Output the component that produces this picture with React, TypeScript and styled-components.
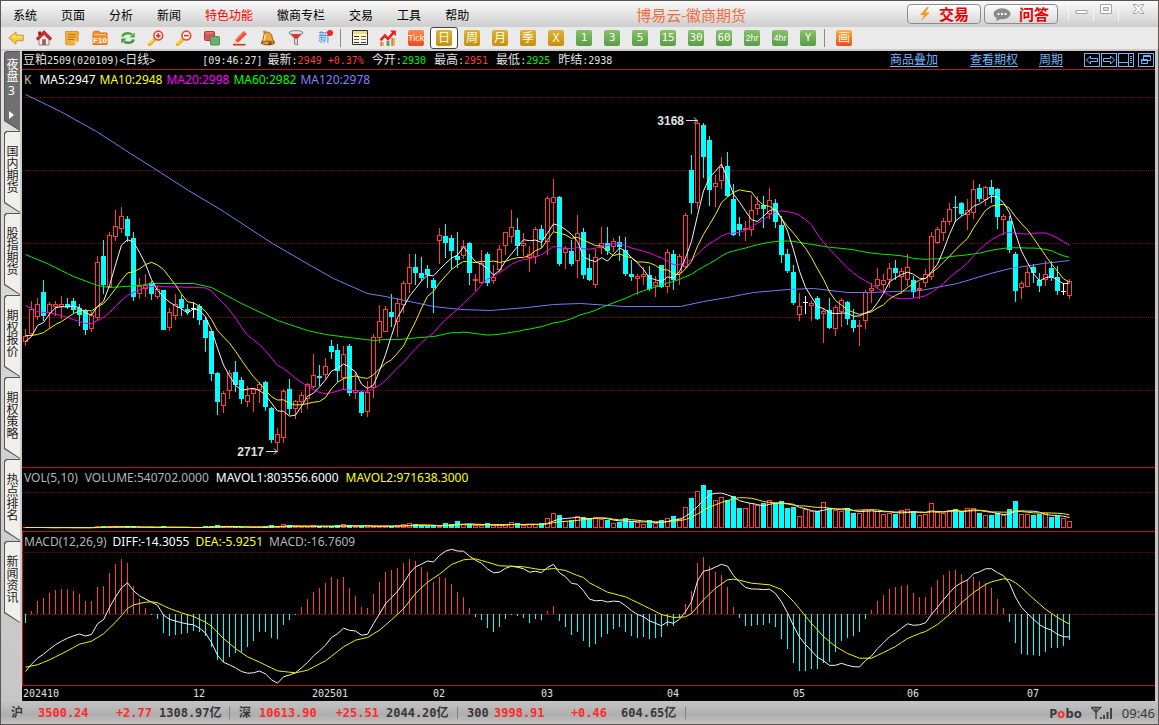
import React from 'react';
import styled, { createGlobalStyle, css } from 'styled-components';

/* ---------- palette and fonts ---------- */

const RED = '#ff3c3c';
const CYAN = '#00ffff';
const RULE = '#c01808';
const HAN = '"Noto Sans", "Noto Sans CJK SC", sans-serif';
const MONO = '"DejaVu Sans Mono", "Noto Sans CJK SC", monospace';

/* ---------- chart data ---------- */

// One entry per trading day: u = up, d = down, f = flat,
// followed by high, body top, body bottom and low on the chart's vertical scale.
const CANDLES = `
u329,336,342,346 u301,309,334,336 u298,304,317,320 d280,292,316,321 u302,304,313,329 u301,304,307,316
u296,304,307,319 d298,304,307,309 d298,301,310,313 d304,308,315,326 d309,311,330,335 u312,315,329,332
u256,262,318,321 d240,256,285,294 u232,235,287,288 u210,226,237,241 u207,216,229,233 d216,219,236,242
d232,238,297,301 u278,286,294,299 u274,285,289,297 d281,283,294,300 u286,289,297,299 d290,290,330,330
u308,312,328,331 u294,304,316,320 d295,299,308,316 d304,309,312,315 f302,308,309,318 d304,306,320,325
d317,320,338,352 d331,331,374,381 d372,373,402,415 u391,393,406,413 u370,373,391,399 d361,372,385,392
d377,380,399,404 u386,395,402,407 u388,389,394,412 u382,384,390,403 d381,382,407,411 d407,408,440,443
u428,434,443,452 u389,391,438,443 d379,389,409,415 u400,401,409,419 u392,395,402,413 u383,384,399,409
u354,375,387,388 d365,376,378,386 u358,366,375,379 d340,346,352,359 d344,350,371,382 u346,354,378,390
d344,346,393,396 u372,390,393,399 d391,392,413,416 u381,392,412,417 u334,337,388,398 u305,321,338,343
u306,309,332,332 d294,312,317,327 u298,303,322,337 u281,283,305,313 u254,267,284,293 d254,267,273,285
d257,273,278,281 d265,269,275,288 d278,280,288,313 u228,235,241,264 d224,236,243,258 d235,238,251,270
d232,256,260,268 u240,246,256,259 d242,243,273,285 u274,279,281,291 u250,263,283,284 d252,254,283,286
u265,277,281,284 u245,249,270,273 u232,232,246,255 u210,227,237,243 d218,230,246,256 u233,243,246,256
u246,254,258,272 u227,229,257,264 d225,229,240,248 u196,198,242,255 u179,197,203,232 d196,197,264,266
u246,248,253,269 d240,251,264,266 u215,233,261,278 d228,232,275,279 d254,268,280,281 u249,257,285,288
u227,243,248,254 d227,243,251,255 u238,241,247,252 d236,242,247,261 d237,250,274,276 d260,274,277,281
u274,276,279,295 u267,274,277,285 d266,275,289,291 u276,282,286,297 d265,265,287,288 u249,252,287,293
d250,254,280,290 u254,256,273,285 u213,215,267,269 d155,170,203,214 u120,123,203,209 d123,125,157,178
d136,140,190,206 u175,183,187,207 u157,167,181,189 d152,166,196,197 d184,199,235,236 d217,224,230,236
u221,228,230,241 u195,210,230,236 u196,204,209,215 d196,205,209,228 u188,200,214,219 d199,203,222,228
d216,225,255,263 d249,254,271,273 d265,272,303,305 u293,306,315,321 f296,302,303,314 u301,303,306,321
d296,298,319,320 u308,311,314,343 d298,310,328,329 u305,307,329,336 u298,300,312,327 d301,302,319,325
d309,320,328,332 u320,325,327,346 u290,292,321,329 u283,288,291,303 u268,279,286,289 u274,280,285,293
u263,268,280,288 d260,268,273,280 u268,271,277,294 u254,267,280,286 d276,280,292,298 u282,288,290,299
u269,274,283,287 u232,236,277,280 u227,229,243,244 u218,221,233,241 u203,209,222,225 d196,207,208,222
d202,203,214,216 u199,210,215,230 u180,189,213,219 d184,188,199,202 u186,187,200,206 d180,187,195,203
d188,189,217,229 u214,216,220,235 d216,221,250,253 d252,254,291,302 u281,283,288,299 u267,272,287,287
d264,267,273,283 d273,280,286,292 u261,274,280,286 d261,268,278,281 d266,277,291,295 f283,291,292,295
u279,281,296,299`
  .trim()
  .split(/\s+/)
  .map((s) => {
    const [high, top, bottom, low] = s.slice(1).split(',').map(Number);
    return { kind: s[0], high, top, bottom, low };
  });

// Bar heights of the volume pane, in thirds of a pixel.
const VOLUMES = [
  3, 2, 2, 3, 2, 2, 3, 2, 2, 3, 2, 3, 6, 6, 6, 5, 4, 5, 5, 3, 3, 3, 3, 6, 3, 3, 3, 3, 2, 3, 6, 6, 9, 5, 5, 4, 4, 4,
  3, 4, 5, 9, 6, 11, 8, 6, 6, 6, 9, 6, 6, 6, 9, 11, 9, 6, 6, 8, 7, 7, 7, 6, 8, 11, 15, 11, 9, 6, 9, 6, 15, 11, 21,
  12, 11, 9, 9, 14, 9, 8, 11, 18, 15, 9, 11, 12, 15, 30, 45, 39, 21, 24, 36, 33, 30, 32, 27, 24, 14, 18, 30, 21, 17,
  11, 24, 15, 24, 30, 36, 29, 63, 90, 111, 129, 114, 84, 93, 84, 96, 60, 60, 75, 69, 75, 84, 75, 81, 60, 63, 36, 57,
  51, 51, 78, 60, 53, 51, 60, 45, 45, 57, 57, 51, 42, 45, 42, 54, 57, 51, 39, 42, 75, 48, 45, 53, 57, 51, 60, 60,
  45, 39, 39, 45, 39, 57, 81, 42, 41, 39, 42, 45, 33, 36, 29, 21,
];

// MACD histogram ends, in thirds of a pixel, growing downwards; 448 is the zero line.
const HISTOGRAM = [
  474, 437, 408, 399, 384, 375, 372, 372, 378, 387, 408, 408, 366, 363, 324, 297, 282, 294, 363, 402, 429, 450, 462,
  504, 513, 510, 507, 504, 498, 501, 513, 546, 585, 591, 576, 564, 561, 546, 528, 501, 501, 519, 522, 480, 465, 448,
  426, 402, 381, 369, 354, 336, 342, 336, 369, 393, 426, 429, 387, 351, 321, 315, 309, 294, 282, 288, 306, 321, 351,
  336, 339, 357, 381, 396, 429, 456, 465, 489, 501, 486, 462, 448, 453, 459, 474, 462, 465, 438, 423, 468, 486, 510,
  501, 528, 546, 537, 516, 507, 492, 486, 501, 513, 519, 516, 522, 519, 516, 483, 483, 460, 417, 378, 294, 276, 303,
  321, 330, 366, 426, 459, 483, 483, 480, 480, 474, 486, 522, 552, 594, 618, 618, 612, 612, 594, 591, 561, 528, 519,
  513, 501, 462, 435, 408, 390, 372, 366, 363, 360, 384, 396, 396, 366, 345, 330, 318, 315, 327, 342, 336, 348, 354,
  369, 402, 429, 471, 534, 567, 570, 570, 573, 561, 549, 549, 543, 525,
];
const ZERO = 448;

type Point = [number, number];

// Signal line: day index and level, joined by straight segments.
const DEA: Point[] = [
  [0, 605], [2, 598], [4, 583], [7, 556], [9, 536], [11, 527], [13, 505], [15, 470], [16, 450], [17, 429], [18, 418],
  [20, 410], [21, 409], [22, 412], [24, 429], [26, 442], [28, 453], [30, 470], [31, 482], [33, 519], [35, 549],
  [37, 574], [39, 590], [42, 616], [45, 622], [47, 614], [50, 586], [53, 544], [55, 524], [57, 516], [59, 494],
  [61, 463], [63, 430], [65, 384], [67, 350], [69, 326], [71, 297], [73, 283], [75, 280], [77, 290], [79, 301],
  [81, 302], [83, 304], [86, 313], [88, 309], [90, 315], [92, 330], [93, 336], [94, 352], [97, 380], [100, 394],
  [103, 420], [106, 447], [108, 456], [110, 454], [111, 444], [113, 403], [115, 368], [117, 343], [118, 341],
  [119, 344], [121, 353], [124, 358], [126, 372], [128, 408], [129, 430], [131, 474], [133, 513], [135, 543],
  [137, 564], [139, 578], [141, 578], [143, 561], [145, 543], [147, 519], [149, 504], [150, 498], [152, 477],
  [154, 447], [156, 412], [158, 381], [160, 357], [161, 349], [163, 340], [164, 342], [165, 352], [166, 366],
  [168, 400], [170, 431], [172, 456], [174, 476],
];

// Averages that reach back before the first visible day start from known levels.
const MA5_HEAD = [341, 336, 325, 322];
const MA10_HEAD = [335, 335, 334, 332, 328, 324, 321, 317, 313];
const MA20_HEAD = [305, 308, 311, 312, 312, 314, 315, 317, 319, 321, 323, 323, 320, 317, 312, 306, 300, 295, 292];
const MA60_HEAD: Point[] = [
  [0, 254], [4, 264], [8, 276], [12, 285], [14, 287], [19, 285], [21, 283], [28, 283], [31, 287], [36, 303],
  [42, 320], [47, 330], [50, 334], [54, 337], [58, 340],
];
const MA120: Point[] = [
  [25, 94], [60, 111], [96, 131], [130, 153], [160, 172], [188, 190], [220, 209], [272, 243], [310, 265], [333, 278],
  [367, 293], [385, 296], [433, 306], [460, 309], [490, 310], [527, 307], [553, 304], [580, 303], [623, 306],
  [680, 306], [703, 301], [727, 297], [753, 292], [787, 289], [813, 288], [847, 292], [869, 292], [920, 290],
  [957, 283], [990, 273], [1010, 268], [1043, 263], [1069, 260],
];

const MONTHS: [number, string][] = [
  [23, '202410'], [193, '12'], [312, '202501'], [433, '02'], [541, '03'], [667, '04'], [793, '05'], [907, '06'],
  [1027, '07'],
];

/* ---------- chart maths ---------- */

const dayX = (i: number) => 25 + 6 * i;

const interpolate = (points: Point[], i: number) => {
  const k = points.findIndex(([x]) => x >= i);
  if (k <= 0) return points[Math.max(k, 0)][1];
  const [x0, y0] = points[k - 1];
  const [x1, y1] = points[k];
  return y0 + ((y1 - y0) * (i - x0)) / (x1 - x0);
};

const movingAverage = (values: number[], n: number, head: number[]) =>
  values.map((_, i) =>
    i < n - 1 ? head[i] : values.slice(i - n + 1, i + 1).reduce((a, b) => a + b, 0) / n,
  );

const toPoints = (levels: number[]) => levels.map((y, i) => `${dayX(i) + 0.5},${(y + 0.5).toFixed(1)}`).join(' ');

const closes = CANDLES.map((c) => (c.kind === 'd' ? c.bottom - 1 : c.top));
const ma5 = movingAverage(closes, 5, MA5_HEAD);
const ma10 = movingAverage(closes, 10, MA10_HEAD);
const ma20 = movingAverage(closes, 20, MA20_HEAD);
const ma60 = movingAverage(closes, 60, Array.from({ length: 59 }, (_, i) => interpolate(MA60_HEAD, i)));

const volumeLevel = (v: number) => 528 - v / 3;
const mavol1 = movingAverage(VOLUMES, 5, Array(4).fill(3)).map(volumeLevel);
const mavol2 = movingAverage(VOLUMES, 10, Array(9).fill(3)).map(volumeLevel);

const macdLevel = (v: number) => 465 + v / 3;
const deaValues = HISTOGRAM.map((_, i) => interpolate(DEA, i));
const dea = deaValues.map(macdLevel);
const diff = deaValues.map((v, i) => macdLevel(v + (HISTOGRAM[i] - ZERO) / 2));

/* ---------- page frame ---------- */

const GlobalStyle = createGlobalStyle`
  * { box-sizing: border-box; }
  body { margin: 0; background: #c8c8c8; font: 12px/16px ${HAN}; color: #000; }
  button { font: inherit; color: inherit; border: 0; background: none; padding: 0; cursor: default; }
`;

const Frame = styled.div`
  display: flex;
  flex-direction: column;
  min-height: 100vh;
  border: 1px solid #5a5656;
  overflow: hidden;
`;

const TitleBar = styled.header`
  display: flex;
  height: 26px;
  background: linear-gradient(#fafafa, #e4e4e4 50%, #cdcdcd);
`;

const Menu = styled.nav`
  display: flex;
`;

const MenuItem = styled.button<{ $hot?: boolean }>`
  padding: 4px 12px 0;
  color: ${(p) => (p.$hot ? '#ff0000' : '#000')};
`;

const Brand = styled.h1`
  flex: 1;
  margin: 0;
  padding-right: 6px;
  text-align: center;
  font-size: 15px;
  font-weight: 400;
  line-height: 28px;
  color: #f26c42;
  white-space: nowrap;
`;

const PillButton = styled.button`
  display: flex;
  align-items: center;
  justify-content: center;
  gap: 8px;
  width: 74px;
  height: 20px;
  margin: 3px 3px 0 0;
  border: 1px solid #8c8c8c;
  border-radius: 4px;
  background: linear-gradient(#fdfdfd, #d8d8d8);
  color: #e60000;
  font-size: 15px;
  font-weight: 700;
  line-height: 18px;
`;

const WindowButtons = styled.div`
  display: flex;
  padding-left: 7px;
`;

const WindowButton = styled.button<{ $wide?: boolean }>`
  display: flex;
  justify-content: center;
  padding-top: 2px;
  width: ${(p) => (p.$wide ? 40 : 25)}px;
  height: 20px;
  border-left: 1px solid #f6f6f6;
`;

const Toolbar = styled.div`
  display: flex;
  align-items: center;
  height: 24px;
  padding-left: 1px;
  background: #eaeaea;
  border-bottom: 2px solid #d2caca;
`;

const ToolButton = styled.button<{ $on?: boolean }>`
  display: flex;
  align-items: center;
  justify-content: center;
  width: 28px;
  height: 22px;
  ${(p) =>
    p.$on &&
    css`
      background: #fff;
      border: 1px solid #444;
      border-radius: 3px;
    `}
`;

const Divider = styled.i`
  width: 1px;
  height: 18px;
  margin: 0 5px 0 2px;
  background: #8a8a8a;
`;

const TILE = {
  gold: 'linear-gradient(#dfb23c, #c48f0c)',
  green: 'linear-gradient(#86c26c, #5a9c48)',
  orange: 'linear-gradient(#ff8a4a, #ee4a20)',
  amber: 'linear-gradient(#ffb040, #f04a18)',
};

const Tile = styled.span<{ $tone: keyof typeof TILE; $size: number }>`
  width: 16px;
  height: 16px;
  border-radius: 2px;
  overflow: hidden;
  background: ${(p) => TILE[p.$tone]};
  color: #fffbe0;
  text-align: center;
  font-family: ${(p) =>
    p.$size === 12 ? HAN : p.$size === 11 ? MONO : '"Liberation Sans Narrow", "Liberation Sans", sans-serif'};
  font-size: ${(p) => p.$size}px;
  line-height: 16px;
  white-space: nowrap;
`;

const NewMark = styled.span`
  position: relative;
  color: #3f8ee8;
  &::after {
    content: '';
    position: absolute;
    top: 0;
    right: -3px;
    width: 6px;
    height: 6px;
    border-radius: 50%;
    background: #ff2020;
  }
`;

const Body = styled.main`
  display: flex;
  flex: 1;
`;

const SideTabs = styled.nav`
  display: flex;
  flex-direction: column;
  width: 21px;
  padding-left: 3px;
  background: linear-gradient(#e2e2e2, #c6c6c6);
  border-right: 2px solid #d2caca;
`;

const SideTab = styled.button<{ $on?: boolean }>`
  position: relative;
  z-index: 0;
  display: flex;
  flex-direction: column;
  align-items: center;
  justify-content: space-between;
  height: ${(p) => (p.$on ? 80 : 82)}px;
  padding: ${(p) => (p.$on ? '7px 2px 12px 0' : '14px 2px 12px 0')};
  background: #555;
  color: ${(p) => (p.$on ? '#fff' : '#222')};
  clip-path: polygon(2px 0, 100% 0, 100% 100%, 0 calc(100% - 10px), 0 2px);
  line-height: 12px;
  &::before {
    content: '';
    position: absolute;
    z-index: -1;
    inset: 1px 0 1px 1px;
    background: ${(p) => (p.$on ? '#707070' : '#f0f0ea')};
    clip-path: polygon(2px 0, 100% 0, 100% 100%, 0 calc(100% - 10px), 0 2px);
  }
`;

const Upright = styled.span`
  writing-mode: vertical-rl;
  text-orientation: upright;
  line-height: 14px;
`;

const Sheet = styled.section`
  flex: 1;
  min-width: 0;
  margin-right: 3px;
  background: #000;
  color: #e0e0e0;
  overflow: hidden;
`;

const QuoteBar = styled.div`
  display: flex;
  align-items: center;
  height: 19px;
  padding: 0 1px;
  border-bottom: 1px solid ${RULE};
  white-space: nowrap;
`;

const Quote = styled.span<{ $gap?: number }>`
  margin-right: ${(p) => p.$gap ?? 8}px;
`;

const Digits = styled.span<{ $color?: string }>`
  font-family: ${MONO};
  font-size: 10px;
  color: ${(p) => p.$color ?? 'inherit'};
`;

const SheetLinks = styled.div`
  display: flex;
  align-items: center;
  margin-left: auto;
`;

const SheetLink = styled.a<{ $gap: number }>`
  margin-right: ${(p) => p.$gap}px;
  color: #74b4f8;
  text-decoration: underline;
  text-underline-offset: 2px;
`;

const PanelButton = styled.button<{ $apart?: boolean }>`
  display: flex;
  width: 16px;
  height: 14px;
  margin-left: ${(p) => (p.$apart ? 4 : 1)}px;
  border: 1px solid #74b4f8;
`;

const Pane = styled.div<{ $first?: boolean; $marked?: boolean }>`
  border-top: ${(p) => (p.$first ? '0' : `1px solid ${RULE}`)};
  box-shadow: ${(p) => (p.$marked ? `inset 1px 0 ${RULE}` : 'none')};
`;

const Legend = styled.div<{ $gap: number }>`
  display: flex;
  gap: ${(p) => p.$gap}px;
  height: 20px;
  padding-left: 2px;
  line-height: 20px;
  white-space: nowrap;
`;

const LegendItem = styled.span<{ $color: string; $wide?: boolean }>`
  color: ${(p) => p.$color};
  margin-right: ${(p) => (p.$wide ? 4 : 0)}px;
`;

const Plot = styled.svg`
  display: block;
  width: 100%;
  overflow: visible;
`;

const StatusBar = styled.footer`
  display: flex;
  align-items: center;
  height: 23px;
  padding-left: 10px;
  background: linear-gradient(#c4c4c4, #aeaeae 60%, #c2c2c2);
  color: #383838;
  white-space: nowrap;
`;

const IndexName = styled.span<{ $width: number }>`
  width: ${(p) => p.$width}px;
  font-family: ${MONO};
  font-weight: 700;
`;

const IndexValue = styled.span<{ $width: number; $red?: boolean; $pad?: number }>`
  width: ${(p) => p.$width}px;
  text-align: ${(p) => (p.$pad ? 'right' : 'left')};
  padding-right: ${(p) => p.$pad ?? 0}px;
  font-family: ${MONO};
  font-weight: 700;
  color: ${(p) => (p.$red ? '#ff2a2a' : 'inherit')};
`;

const StatusRule = styled.i`
  width: 1px;
  height: 12px;
  margin-right: 9px;
  background: #808080;
`;

const StatusEnd = styled.div`
  display: flex;
  align-items: center;
  gap: 9px;
  margin-left: auto;
  padding-right: 3px;
  font-size: 13px;
`;

const PoboMark = styled.b`
  em {
    font-style: normal;
    color: #ff2a2a;
  }
`;

/* ---------- icons ---------- */

const Icon = ({ children, label }: { children: React.ReactNode; label: string }) => (
  <svg width="16" height="16" viewBox="0 0 16 16" fill="none" role="img" aria-label={label}>
    {children}
  </svg>
);

const Lens = ({ plus }: { plus?: boolean }) => (
  <Icon label={plus ? '放大' : '缩小'}>
    <path d="M1.5 14.5 6.5 9.5" stroke="#f0b000" strokeWidth="3.4" strokeLinecap="round" />
    <path d="M1.5 13.5 6 9" stroke="#ffe060" strokeWidth="1.2" strokeLinecap="round" />
    <circle cx="10.3" cy="5.6" r="4.4" fill="#fff4f0" stroke="#e05038" strokeWidth="1.7" />
    <path d={plus ? 'M8 5.6h4.6M10.3 3.3v4.6' : 'M8 5.6h4.6'} stroke="#d83020" strokeWidth="1.6" />
  </Icon>
);

const glyphs: React.ReactNode[] = [
  <Icon label="后退">
    <path d="M.8 8 8 1.8v3.4h7.2v5.6H8v3.4Z" fill="#fbc840" stroke="#cf9428" />
    <path d="M3 7.8 7.4 4v2.3H14v1.2Z" fill="#ffe48a" />
  </Icon>,
  <Icon label="首页">
    <path d="M3 7.5 8 3l5 4.5V15H3Z" fill="#ececec" stroke="#8c8c8c" />
    <path d="M2.2 1.5h2.8v3.5H2.2Z" fill="#a01818" />
    <path d="M.2 8.6 8 .6l7.8 8-1.8 1.6L8 4.6 2 10.2Z" fill="#d42c2c" stroke="#a01818" strokeWidth=".8" />
    <path d="M6.2 9.2h3.6V15H6.2Z" fill="#a05848" />
  </Icon>,
  <Icon label="公告">
    <path d="M1.5 1.5H14l.8 2.5-.8 1v6l-3.5 3.8h-8L1.2 13l.8-1Z" fill="#f0b03c" stroke="#dc9424" />
    <path d="M4 4.5h8M4 7h7.5M4 9.500h6" stroke="#b8741c" />
    <path d="M14 11h-3.5v3.8Z" fill="#ffe0a0" />
  </Icon>,
  <Icon label="资料">
    <path d="M1 3 2 1.3h5L8 3h7v11.500H1Z" fill="#fc8c28" stroke="#ea6c18" />
    <path d="M2 4h12v1H2Z" fill="#ffd09a" />
    <text x="8" y="13" textAnchor="middle" fontFamily="Liberation Sans" fontSize="8" fontWeight="700" fill="#fff">
      F10
    </text>
  </Icon>,
  <Icon label="刷新">
    <path d="M2.3 6.7C3 4.3 5 3.200 8 3.200c1.8 0 3 .5 4 1.5" stroke="#4ca83c" strokeWidth="2.5" />
    <path d="M14.7 2.5v5H9.5Z" fill="#4ca83c" />
    <path d="M13.7 9.3C13 11.7 11 12.8 8 12.8c-1.8 0-3-.5-4-1.5" stroke="#3c9838" strokeWidth="2.5" />
    <path d="M1.3 13.5v-5h5.2Z" fill="#3c9838" />
  </Icon>,
  <Lens plus />,
  <Lens />,
  <Icon label="叠加">
    <rect x=".5" y="1.5" width="10" height="9" rx="1" fill="#d85454" stroke="#b83838" />
    <rect x="6.5" y="6.5" width="9" height="8.5" rx="1" fill="#6cb070" stroke="#4a8c50" />
    <path d="M2 3h7" stroke="#f09090" />
  </Icon>,
  <Icon label="画线">
    <path d="m3 10 8.5-9 3.300 3L6 12.8Z" fill="#ee5030" />
    <path d="m4 10 8.5-8.6" stroke="#ff9a80" />
    <path d="M3 10 1.5 14 6 12.8Z" fill="#f4c890" />
    <path d="M1 14.7h12.5" stroke="#d83020" strokeWidth="1.6" />
  </Icon>,
  <Icon label="预警">
    <path d="M4.5 2.800C8 .5 12.5 4 12.2 8.200l2.300 4L1.200 13.400l1.800-4Z" fill="#f0a838" stroke="#9c5810" />
    <path d="M5.2 4.5C4.500 6.5 4.700 8.5 4 10.5" stroke="#ffe09a" strokeWidth="1.4" />
    <circle cx="4.5" cy="1.8" r="1.400" fill="#c88020" />
    <ellipse cx="8" cy="13" rx="6.5" ry="1.8" fill="#e0a040" stroke="#8c4c10" />
    <circle cx="10" cy="13.500" r="1.600" fill="#784008" />
  </Icon>,
  <Icon label="过滤">
    <path d="M1.3 2.5 6.5 8.500V14l3 1V8.500l5.200-6Z" fill="#d8d8d8" stroke="#848484" />
    <ellipse cx="8" cy="2.600" rx="6.800" ry="2" fill="#e8e8e8" stroke="#848484" />
    <path d="M2.800 4h10.400L9 8.800H7Z" fill="#e03030" />
  </Icon>,
  <NewMark>新</NewMark>,
];

const ListIcon = () => (
  <Icon label="报价表">
    <path d="M.5 .5h15v14H.5Z" fill="#fffbe4" stroke="#303030" />
    <path d="M1 2.500h14" stroke="#f0dc80" strokeWidth="3" />
    <path d="M2 6.500h5M2 12.500h5" stroke="#303030" />
    <path d="M9 6.500h5M2 9.500h5" stroke="#e03030" />
    <path d="M9 9.500h5" stroke="#30a030" />
    <path d="M9 12.500h5" stroke="#3030d0" />
  </Icon>
);

const TrendIcon = () => (
  <Icon label="走势">
    <path d="M1 12h3v4H1ZM12 8h3v8h-3Z" fill="#e8b850" />
    <path d="M6.500 11h3v5h-3Z" fill="#58a858" />
    <path d="M1 12v4M12 8v8" stroke="#c04040" />
    <path d="M.5 10.500 5 5.500l3 3.500 6-7" stroke="#ee1c1c" strokeWidth="2.600" />
    <path d="M10 .5h5.800v5.700Z" fill="#ee1c1c" />
  </Icon>
);

/* ---------- chart pieces ---------- */

const GridLine = ({ y, color = '#7c0404' }: { y: number; color?: string }) => (
  <line x1="22" x2="3000" y1={y + 0.5} y2={y + 0.5} stroke={color} strokeDasharray="1 1" />
);

const Body5 = ({ x, top, bottom, up }: { x: number; top: number; bottom: number; up: boolean }) =>
  up && bottom - top > 2 ? (
    <rect x={x + 0.5} y={top + 0.5} width="4" height={bottom - top - 1} fill="#000" stroke={RED} />
  ) : (
    <rect x={x} y={top} width="5" height={Math.max(bottom - top, 1)} fill={up ? RED : CYAN} />
  );

const Candle = ({ index }: { index: number }) => {
  const { kind, high, top, bottom, low } = CANDLES[index];
  const x = dayX(index);
  const color = kind === 'u' ? RED : kind === 'd' ? CYAN : '#fff';
  return (
    <g>
      <rect x={x} y={high} width="1" height={low - high} fill={color} />
      {kind === 'f' ? (
        <rect x={x - 2} y={top} width="5" height="1" fill="#fff" />
      ) : (
        <Body5 x={x - 2} top={top} bottom={bottom} up={kind === 'u'} />
      )}
    </g>
  );
};

const Curve = ({ points, color }: { points: string; color: string }) => (
  <polyline points={points} fill="none" stroke={color} />
);

const Marker = ({ x, y, text }: { x: number; y: number; text: string }) => (
  <g>
    <text x={x} y={y} fontFamily="Liberation Sans" fontSize="12" fontWeight="700" fill="#e0e0e0" textAnchor="end">
      {text}
    </text>
    <path d={`M${x + 2} ${y - 4.5}h11m-3-3 3 3-3 3`} fill="none" stroke="#d8d8d8" />
  </g>
);

const PricePlot = () => (
  <Plot height="377" role="img" aria-label="K线图">
    <g transform="translate(-22 -90)">
      {[97, 170, 243, 317, 390].map((y) => (
        <GridLine key={y} y={y} />
      ))}
      {CANDLES.map((_, i) => (
        <Candle key={i} index={i} />
      ))}
      <Curve points={MA120.map(([x, y]) => `${x + 0.5},${y + 0.5}`).join(' ')} color="#7878f8" />
      <Curve points={toPoints(ma60)} color="#00f000" />
      <Curve points={toPoints(ma20)} color="#f000f0" />
      <Curve points={toPoints(ma10)} color="#f4f400" />
      <Curve points={toPoints(ma5)} color="#f4f4f4" />
      <Marker x={684} y={125} text="3168" />
      <Marker x={264} y={456} text="2717" />
    </g>
  </Plot>
);

const VolumePlot = () => (
  <Plot height="43" role="img" aria-label="成交量">
    <g transform="translate(-22 -488)">
      <GridLine y={492} />
      {VOLUMES.map((v, i) => (
        <Body5 key={i} x={dayX(i) - 2} top={528 - Math.round(v / 3)} bottom={528} up={CANDLES[i].kind !== 'd'} />
      ))}
      <Curve points={toPoints(mavol1)} color="#f4f4f4" />
      <Curve points={toPoints(mavol2)} color="#f4f400" />
    </g>
  </Plot>
);

const MacdPlot = () => (
  <Plot height="133" role="img" aria-label="MACD">
    <g transform="translate(-22 -552)">
      <GridLine y={552} />
      <GridLine y={614} color="#a40a0a" />
      {HISTOGRAM.map((v, i) => {
        const end = Math.round(macdLevel(v));
        return (
          <rect
            key={i}
            x={dayX(i)}
            y={Math.min(end, 614)}
            width="1"
            height={Math.max(Math.abs(end - 614), 1)}
            fill={v < ZERO ? RED : CYAN}
          />
        );
      })}
      <Curve points={toPoints(diff)} color="#f4f4f4" />
      <Curve points={toPoints(dea)} color="#f4f400" />
    </g>
  </Plot>
);

/* ---------- page ---------- */

const MENUS = ['系统', '页面', '分析', '新闻', '特色功能', '徽商专栏', '交易', '工具', '帮助'];
const TABS = ['国内期货', '股指期货', '期权报价', '期权策略', '热点排名', '新闻资讯'];
const PERIODS = ['周', '月', '季', 'X'];
const MINUTES = ['1', '3', '5', '15', '30', '60', '2hr', '4hr', 'Y'];

const PRICES: [string, string, string][] = [
  ['今开', '2930', '#00f000'],
  ['最高', '2951', RED],
  ['最低', '2925', '#00f000'],
  ['昨结', '2938', '#e0e0e0'],
];

// Column widths: name, value, change, amount; pad is the space after the change.
const INDICES = [
  { name: '沪', value: '3500.24', change: '+2.77', amount: '1308.97', widths: [27, 49, 72, 70], pad: 7 },
  { name: '深', value: '10613.90', change: '+25.51', amount: '2044.20', widths: [20, 56, 71, 71], pad: 7 },
  { name: '300', value: '3998.91', change: '+0.46', amount: '604.65', widths: [27, 49, 78, 64], pad: 14 },
];

export default function App() {
  return (
    <Frame>
      <GlobalStyle />
      <TitleBar>
        <Menu>
          {MENUS.map((m) => (
            <MenuItem key={m} $hot={m === '特色功能'}>
              {m}
            </MenuItem>
          ))}
        </Menu>
        <Brand>博易云-徽商期货</Brand>
        <PillButton>
          <svg width="12" height="14" viewBox="0 0 12 14" aria-hidden="true">
            <path d="M8 0 1 8h4l-3 6 9-8.500H6.500L10 0Z" fill="#f59a23" />
          </svg>
          交易
        </PillButton>
        <PillButton>
          <svg width="18" height="13" viewBox="0 0 18 13" aria-hidden="true">
            <ellipse cx="9" cy="5.8" rx="8.5" ry="5.5" fill="#8a8a8a" />
            <path d="m4 9-1 4 5-2Z" fill="#8a8a8a" />
            <path d="M4.500 5h2v2h-2ZM8 5h2v2H8ZM11.500 5h2v2h-2Z" fill="#fff" />
          </svg>
          问答
        </PillButton>
        <WindowButtons>
          <WindowButton aria-label="最小化">
            <svg width="13" height="14" viewBox="0 0 13 14">
              <path d="M1 7.500h11v3H1Z" fill="#fff" stroke="#a4a4a4" />
            </svg>
          </WindowButton>
          <WindowButton aria-label="还原">
            <svg width="13" height="14" viewBox="0 0 13 14">
              <path d="M.5 1.500h11v9H.5Z" fill="#fff" stroke="#a4a4a4" />
              <path d="M3.500 4.500h5v3h-5Z" fill="#ddd" stroke="#a4a4a4" />
            </svg>
          </WindowButton>
          <WindowButton $wide aria-label="关闭">
            <svg width="13" height="14" viewBox="0 0 13 14">
              <path
                d="M1 1.500h3.500L6.500 4l2-2.500H12L8.500 6l3.500 4.500H8.500l-2-2.500-2 2.500H1L4.500 6Z"
                fill="#fff"
                stroke="#a4a4a4"
              />
            </svg>
          </WindowButton>
        </WindowButtons>
      </TitleBar>

      <Toolbar>
        {glyphs.map((g, i) => (
          <ToolButton key={i}>{g}</ToolButton>
        ))}
        <Divider />
        <ToolButton>
          <ListIcon />
        </ToolButton>
        <ToolButton>
          <TrendIcon />
        </ToolButton>
        <ToolButton>
          <Tile $tone="orange" $size={9}>Tick</Tile>
        </ToolButton>
        <ToolButton $on>
          <Tile $tone="gold" $size={12}>日</Tile>
        </ToolButton>
        {PERIODS.map((p) => (
          <ToolButton key={p}>
            <Tile $tone="gold" $size={12}>{p}</Tile>
          </ToolButton>
        ))}
        {MINUTES.map((m) => (
          <ToolButton key={m}>
            <Tile $tone="green" $size={m.length > 2 ? 9 : 11}>{m}</Tile>
          </ToolButton>
        ))}
        <Divider />
        <ToolButton>
          <Tile $tone="amber" $size={12}>画</Tile>
        </ToolButton>
      </Toolbar>

      <Body>
        <SideTabs>
          <SideTab $on>
            <Upright>夜盘3</Upright>
            <svg width="5" height="8" viewBox="0 0 5 8" aria-hidden="true">
              <path d="M0 0v8l5-4Z" fill="#fff" />
            </svg>
          </SideTab>
          {TABS.map((t) => (
            <SideTab key={t}>
              <Upright>{t}</Upright>
            </SideTab>
          ))}
        </SideTabs>

        <Sheet>
          <QuoteBar>
            <Quote $gap={47}>
              豆粕<Digits>2509(020109)&lt;</Digits>日线<Digits>&gt;</Digits>
            </Quote>
            <Quote $gap={5}>
              <Digits>[09:46:27]</Digits>
            </Quote>
            <Quote $gap={6}>
              最新<Digits>:</Digits>
              <Digits $color={RED}>2949</Digits>
            </Quote>
            <Quote>
              <Digits $color={RED}>+0.37%</Digits>
            </Quote>
            {PRICES.map(([name, value, color]) => (
              <Quote key={name}>
                {name}
                <Digits>:</Digits>
                <Digits $color={color}>{value}</Digits>
              </Quote>
            ))}
            <SheetLinks>
              <SheetLink href="#overlay" $gap={32}>商品叠加</SheetLink>
              <SheetLink href="#options" $gap={21}>查看期权</SheetLink>
              <SheetLink href="#period" $gap={20}>周期</SheetLink>
              <PanelButton aria-label="向左">
                <svg width="14" height="12" viewBox="0 0 14 12">
                  <path d="m1.500 6 4-4v2.500h7v3h-7V10Z" fill="none" stroke="#74b4f8" />
                </svg>
              </PanelButton>
              <PanelButton aria-label="向右">
                <svg width="14" height="12" viewBox="0 0 14 12">
                  <path d="m12.500 6-4-4v2.500h-7v3h7V10Z" fill="none" stroke="#74b4f8" />
                </svg>
              </PanelButton>
              <PanelButton aria-label="分栏">
                <svg width="14" height="12" viewBox="0 0 14 12">
                  <path d="M0 8.500h9M9.500 0v12M11 2.500h2M11 4.500h2M11 6.500h2M11 8.500h2" fill="none" stroke="#74b4f8" />
                </svg>
              </PanelButton>
              <PanelButton $apart aria-label="还原窗口">
                <svg width="14" height="12" viewBox="0 0 14 12">
                  <path
                    d="M4.500 5V1.500h7v5H9M2.500 5.500h6v4h-6ZM4.500 2.500h7M2.500 6.500h6"
                    fill="none"
                    stroke="#74b4f8"
                  />
                </svg>
              </PanelButton>
            </SheetLinks>
          </QuoteBar>

          <Pane $first>
            <Legend $gap={4}>
              <LegendItem $color="#c0c0c0" $wide>K</LegendItem>
              <LegendItem $color="#fff">MA5:2947</LegendItem>
              <LegendItem $color="#ffff00">MA10:2948</LegendItem>
              <LegendItem $color="#ff00ff">MA20:2998</LegendItem>
              <LegendItem $color="#00ff00">MA60:2982</LegendItem>
              <LegendItem $color="#8080ff">MA120:2978</LegendItem>
            </Legend>
            <PricePlot />
          </Pane>

          <Pane>
            <Legend $gap={7}>
              <LegendItem $color="#b4b4b4">VOL(5,10)</LegendItem>
              <LegendItem $color="#b4b4b4">VOLUME:540702.0000</LegendItem>
              <LegendItem $color="#fff">MAVOL1:803556.6000</LegendItem>
              <LegendItem $color="#ffff00">MAVOL2:971638.3000</LegendItem>
            </Legend>
            <VolumePlot />
          </Pane>

          <Pane $marked>
            <Legend $gap={6}>
              <LegendItem $color="#b4b4b4">MACD(12,26,9)</LegendItem>
              <LegendItem $color="#fff">DIFF:-14.3055</LegendItem>
              <LegendItem $color="#ffff00">DEA:-5.9251</LegendItem>
              <LegendItem $color="#b4b4b4">MACD:-16.7609</LegendItem>
            </Legend>
            <MacdPlot />
          </Pane>

          <Pane>
            <Plot height="15" role="img" aria-label="日期">
              {MONTHS.map(([x, label]) => (
                <text key={label} x={x - 22} y="11" fontFamily="DejaVu Sans Mono" fontSize="10" fill="#e0e0e0">
                  {label}
                </text>
              ))}
            </Plot>
          </Pane>
        </Sheet>
      </Body>

      <StatusBar>
        {INDICES.map(({ name, value, change, amount, widths, pad }) => (
          <React.Fragment key={name}>
            <IndexName $width={widths[0]}>{name}</IndexName>
            <IndexValue $width={widths[1]} $red>{value}</IndexValue>
            <IndexValue $width={widths[2]} $red $pad={pad}>{change}</IndexValue>
            <IndexValue $width={widths[3]}>{amount}亿</IndexValue>
            <StatusRule />
          </React.Fragment>
        ))}
        <StatusEnd>
          <PoboMark>
            P<em>o</em>bo
          </PoboMark>
          <svg width="22" height="14" viewBox="0 0 22 14" role="img" aria-label="信号">
            <path d="M.5 1.500h9L5 6.500ZM5 1v12" fill="none" stroke="#444" strokeWidth="1.500" />
            <path d="M9 11h2v2H9ZM12 9h2v4h-2ZM15.500 6h2v7h-2ZM19 2h2v11h-2Z" fill="#444" />
          </svg>
          <time>09:46</time>
        </StatusEnd>
      </StatusBar>
    </Frame>
  );
}
